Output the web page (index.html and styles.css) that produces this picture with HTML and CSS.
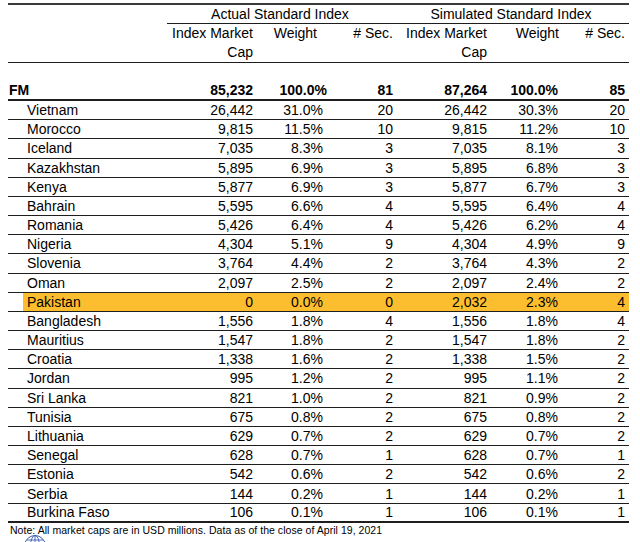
FILE: index.html
```html
<!DOCTYPE html>
<html>
<head>
<meta charset="utf-8">
<link rel="stylesheet" href="styles.css">
</head>
<body>
<div class="sheet">
  <div class="row grp">
    <div></div>
    <div class="g g1">Actual Standard Index</div>
    <div class="g g2">Simulated Standard Index</div>
  </div>
  <div class="row sub">
    <div></div>
    <div class="h">Index Market<br>Cap</div>
    <div class="h hw1">Weight</div>
    <div class="h">#&nbsp;Sec.</div>
    <div class="h">Index Market<br>Cap</div>
    <div class="h hw2">Weight</div>
    <div class="h last">#&nbsp;Sec.</div>
  </div>
  <div class="row blank"></div>
  <div class="row fm">
    <div class="name">FM</div><div>85,232</div><div class="w1">100.0%</div><div>81</div><div>87,264</div><div>100.0%</div><div class="last">85</div>
  </div>
  <div class="row c"><div class="name">Vietnam</div><div>26,442</div><div>31.0%</div><div>20</div><div>26,442</div><div>30.3%</div><div class="last">20</div></div>
  <div class="row c"><div class="name">Morocco</div><div>9,815</div><div>11.5%</div><div>10</div><div>9,815</div><div>11.2%</div><div class="last">10</div></div>
  <div class="row c"><div class="name">Iceland</div><div>7,035</div><div>8.3%</div><div>3</div><div>7,035</div><div>8.1%</div><div class="last">3</div></div>
  <div class="row c"><div class="name">Kazakhstan</div><div>5,895</div><div>6.9%</div><div>3</div><div>5,895</div><div>6.8%</div><div class="last">3</div></div>
  <div class="row c"><div class="name">Kenya</div><div>5,877</div><div>6.9%</div><div>3</div><div>5,877</div><div>6.7%</div><div class="last">3</div></div>
  <div class="row c"><div class="name">Bahrain</div><div>5,595</div><div>6.6%</div><div>4</div><div>5,595</div><div>6.4%</div><div class="last">4</div></div>
  <div class="row c"><div class="name">Romania</div><div>5,426</div><div>6.4%</div><div>4</div><div>5,426</div><div>6.2%</div><div class="last">4</div></div>
  <div class="row c"><div class="name">Nigeria</div><div>4,304</div><div>5.1%</div><div>9</div><div>4,304</div><div>4.9%</div><div class="last">9</div></div>
  <div class="row c"><div class="name">Slovenia</div><div>3,764</div><div>4.4%</div><div>2</div><div>3,764</div><div>4.3%</div><div class="last">2</div></div>
  <div class="row c"><div class="name">Oman</div><div>2,097</div><div>2.5%</div><div>2</div><div>2,097</div><div>2.4%</div><div class="last">2</div></div>
  <div class="row c hl"><div class="name">Pakistan</div><div>0</div><div>0.0%</div><div>0</div><div>2,032</div><div>2.3%</div><div class="last">4</div></div>
  <div class="row c"><div class="name">Bangladesh</div><div>1,556</div><div>1.8%</div><div>4</div><div>1,556</div><div>1.8%</div><div class="last">4</div></div>
  <div class="row c"><div class="name">Mauritius</div><div>1,547</div><div>1.8%</div><div>2</div><div>1,547</div><div>1.8%</div><div class="last">2</div></div>
  <div class="row c"><div class="name">Croatia</div><div>1,338</div><div>1.6%</div><div>2</div><div>1,338</div><div>1.5%</div><div class="last">2</div></div>
  <div class="row c"><div class="name">Jordan</div><div>995</div><div>1.2%</div><div>2</div><div>995</div><div>1.1%</div><div class="last">2</div></div>
  <div class="row c"><div class="name">Sri Lanka</div><div>821</div><div>1.0%</div><div>2</div><div>821</div><div>0.9%</div><div class="last">2</div></div>
  <div class="row c"><div class="name">Tunisia</div><div>675</div><div>0.8%</div><div>2</div><div>675</div><div>0.8%</div><div class="last">2</div></div>
  <div class="row c"><div class="name">Lithuania</div><div>629</div><div>0.7%</div><div>2</div><div>629</div><div>0.7%</div><div class="last">2</div></div>
  <div class="row c"><div class="name">Senegal</div><div>628</div><div>0.7%</div><div>1</div><div>628</div><div>0.7%</div><div class="last">1</div></div>
  <div class="row c"><div class="name">Estonia</div><div>542</div><div>0.6%</div><div>2</div><div>542</div><div>0.6%</div><div class="last">2</div></div>
  <div class="row c"><div class="name">Serbia</div><div>144</div><div>0.2%</div><div>1</div><div>144</div><div>0.2%</div><div class="last">1</div></div>
  <div class="row c end"><div class="name">Burkina Faso</div><div>106</div><div>0.1%</div><div>1</div><div>106</div><div>0.1%</div><div class="last">1</div></div>
</div>
<p class="note">Note: All market caps are in USD millions. Data as of the close of April 19, 2021</p>
<div class="foot">
  <span class="dash"></span>
  <svg class="logo" width="26" height="12" viewBox="0 0 26 12">
    <circle cx="13" cy="13" r="10.5" fill="none" stroke="#3a5cb0" stroke-width="1"/>
    <ellipse cx="13" cy="13" rx="4.5" ry="10.5" fill="none" stroke="#3a5cb0" stroke-width="0.9"/>
    <line x1="13" y1="2.5" x2="13" y2="12" stroke="#3a5cb0" stroke-width="0.9"/>
    <line x1="5" y1="7" x2="21" y2="7" stroke="#3a5cb0" stroke-width="0.9"/>
  </svg>
</div>
</body>
</html>
```

FILE: styles.css
```css
html, body {
  margin: 0;
  padding: 0;
  background: #ffffff;
}

body {
  font-family: "Liberation Sans", Arial, sans-serif;
  font-size: 14px;
  color: #000000;
  overflow: hidden;
}

.sheet {
  margin: 3px 0 0 8px;
  width: 621px;
  border-top: 2px solid #3a3a3a;
}

.row {
  display: grid;
  grid-template-columns: 159px 86px 70px 70px 94px 71px 71px;
  align-items: center;
  box-sizing: border-box;
  line-height: 16px;
}

.row > div {
  text-align: right;
  white-space: nowrap;
}

.row > .last {
  padding-right: 4px;
}

.grp {
  height: 19px;
  align-items: stretch;
}

.grp .g {
  text-align: center;
  border-bottom: 1px solid #1e1e1e;
  line-height: 18px;
}

.g1 {
  grid-column: 2 / 5;
}

.g2 {
  grid-column: 5 / 8;
}

.sub {
  height: 39px;
  border-bottom: 1px solid #1e1e1e;
  align-items: start;
}

.sub .h {
  line-height: 19px;
}

.sub .hw1 {
  padding-right: 6px;
}

.sub .hw2 {
  margin-right: -1px;
}

.blank {
  height: 18px;
}

.fm {
  height: 20px;
  border-bottom: 2px solid #1e1e1e;
  font-weight: bold;
}

.fm .w1 {
  margin-right: -4px;
}

.row > .name {
  text-align: left;
}

.fm .name {
  padding-left: 1px;
}

.c {
  height: 19.18px;
  border-bottom: 1px solid #1e1e1e;
}

.c .name {
  padding-left: 19px;
}

.c.end {
  border-bottom-width: 2px;
}

.hl {
  background: linear-gradient(90deg, transparent 15px, #fcbe2e 15px);
}

.note {
  margin: 2px 0 0 10px;
  font-size: 10.5px;
  line-height: 11px;
  letter-spacing: 0.04px;
  white-space: nowrap;
}

.foot {
  display: flex;
  align-items: flex-end;
  height: 8px;
  margin-top: 1px;
  padding-left: 2px;
}

.dash {
  width: 3px;
  height: 1px;
  margin-bottom: 1px;
  background: #555555;
}

.logo {
  display: block;
  margin-left: 17px;
  flex: none;
}
```
